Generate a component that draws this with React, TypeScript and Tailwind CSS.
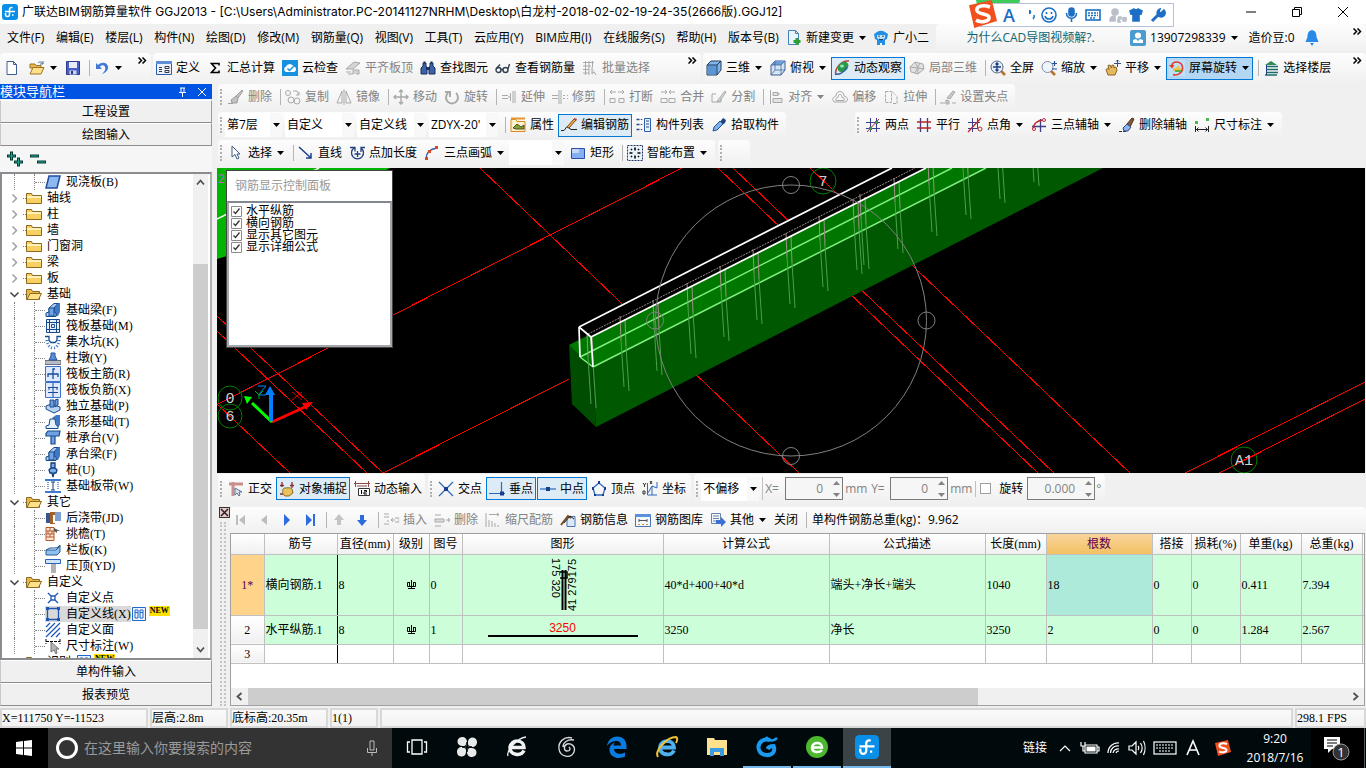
import type { ReactNode } from 'react'

const blue = '#2b5fb4'
const grey = '#a9a9a9'

// all glyphs are drawn on a 16x16 grid
const glyphs: Record<string, ReactNode> = {
  app: (
    <>
      <rect width="16" height="16" rx="3" fill="#0a8fe8" />
      <path d="M10.500 3.500h-1a2 2 0 0 0-2 2v5a2 2 0 0 1-4 0V9M3 7.500h10M10 11h1.500" fill="none" stroke="#fff" strokeWidth="1.500" />
    </>
  ),
  page: <path d="M3 1.500h6.500l3 3v10H3zM9.500 1.500v3h3" fill="#fff" stroke="#3d5f8f" />,
  open: (
    <>
      <path d="M1 4h5l1 1.500h5V8H1z" fill="#e8b84a" stroke="#9b7420" />
      <path d="M1 14 4 7.500h11L12 14z" fill="#ffe08a" stroke="#9b7420" />
      <path d="M9 3c2-2 4-1 5 1m0-3v3h-3" fill="none" stroke="#4d7396" />
    </>
  ),
  save: (
    <>
      <path d="M1.500 1.500h13v13h-13z" fill="#4a5fc4" stroke="#2b3a8c" />
      <path d="M4 2h8v6H4z" fill="#e6ecfa" />
      <path d="M4.500 10.500h7v4h-7z" fill="#cfd6ea" />
      <path d="M6 11h2v3H6z" fill="#2b3a8c" />
    </>
  ),
  undo: (
    <path d="M2 3v6h6L5.800 6.800C8 4.500 11 5 11.300 8c.2 2.500-1.500 4.300-3.300 6 4-1.500 6.500-4 6-7.500C13.300 2 7.500 1.500 4 5z" fill="#3f78d8" />
  ),
  define: (
    <>
      <path d="M.500 1.500h15v13H.500z" fill="#e9f0fb" stroke={blue} />
      <path d="M0 1h16v3H0z" fill="#5e8fd6" />
      <path d="M3 7.500h3m-3 2h3m-3 2h3M9 6.500h4v2H9zm0 4h4v2H9z" fill="none" stroke="#3a3a3a" />
    </>
  ),
  sigma: <path d="M12 5.500V3.500H4.500L8.500 8l-4 4.500H12v-2" fill="none" stroke="#000" strokeWidth="1.600" />,
  cloud: (
    <>
      <path d="M0 0h16v16H0z" fill="#1690e0" />
      <path d="M4 12a3 3 0 0 1 0-5.500 4 4 0 0 1 7.500 0A2.800 2.800 0 0 1 12 12z" fill="#fff" />
      <path d="m5.500 8.500 2 2 4-4" fill="none" stroke="#1690e0" strokeWidth="1.500" />
    </>
  ),
  flush: <path d="M1 9 9 2l6 1-7 6zM3 14h5v-4h6v4h-3M1 12h5" fill="#d4d4d4" stroke={grey} />,
  find: (
    <>
      <path d="M3 3h3v3l1 2v6H1V8l2-2zm7 0h3v3l2 2v6H9V8l1-2z" fill="#3c62a8" stroke="#1c2f5c" />
      <path d="M6 7h4v3H6zM3.500 1.500h2v2h-2zm7 0h2v2h-2z" fill="#1c2f5c" />
    </>
  ),
  glasses: (
    <g fill="none" stroke="#33404f" strokeWidth="1.400">
      <circle cx="3.500" cy="10" r="2.500" />
      <circle cx="10.500" cy="10" r="2.500" />
      <path d="M6 9.500h2M1.500 8.500 5 4.500M13 9l1.500-5" />
    </g>
  ),
  batch: (
    <g fill="none" stroke={grey}>
      <path d="M1 2.500h11M1 6h8M1 9.500h6M1 13h6M3.500 1v14M7 1v14M10.500 1v6" />
      <path d="M10 7v7l2-2 2 3" fill="#ddd" />
    </g>
  ),
  cube: (
    <>
      <path d="m1 5 4-4h10v9l-4 5H1z" fill="#7fb4e8" stroke="#23405f" />
      <path d="M1.500 5.500h9v9h-9z" fill="#5b95d4" />
      <path d="M1 5h10v10M11 5l4-4" fill="none" stroke="#23405f" />
    </>
  ),
  topview: (
    <>
      <path d="m1 5 4-4h10v9l-4 5H1z" fill="#d3e4f6" stroke="#3c5f8a" />
      <path d="m1 5 4-4h10l-4 4z" fill="#6a9fdc" />
      <path d="M1 5h10v10M11 5l4-4M5 1v9h10M5 10l-4 5" fill="none" stroke="#3c5f8a" strokeWidth=".7" />
    </>
  ),
  orbit: (
    <>
      <path d="M2 15C0 9 7 0 15 1" fill="none" stroke="#c43b3b" strokeWidth="1.500" />
      <ellipse cx="9" cy="7" rx="6" ry="4.500" transform="rotate(-40 9 7)" fill="#2a9a4a" />
      <ellipse cx="8" cy="6" rx="2" ry="1.500" fill="#9be3a8" />
      <path d="M1 14c4 1 9-1 12-7" fill="none" stroke="#2d5fae" strokeWidth="1.400" />
    </>
  ),
  partial: <path d="m1 7 5-5 8 2 1 5-6 5-7-2zM6 2l3 6m6 1-6-1-8-1m8 1v6m2-11-5 10" fill="#e2e2e2" stroke={grey} />,
  full: (
    <>
      <path d="m11 11 4 4" stroke="#b5702c" strokeWidth="2.500" />
      <circle cx="7" cy="7" r="6" fill="#e6f0fb" stroke="#56697f" />
      <path d="M7 3v8M3 7h8M5.500 4.500 7 3l1.500 1.500m-3 5L7 11l1.500-1.500" fill="none" stroke="#1c3c82" strokeWidth="1.300" />
    </>
  ),
  zoom: (
    <>
      <path d="m10 11 4 4" stroke="#b5702c" strokeWidth="2.500" />
      <circle cx="6.500" cy="7" r="5.500" fill="#eef5fc" stroke="#7c8c9e" />
      <path d="M11 3.500h5M13.500 1v5M11 9h5" fill="none" stroke="#24519b" strokeWidth="1.200" />
    </>
  ),
  pan: (
    <>
      <path d="M3 15 1 9.500l2-1 1 1-1-4 2-.500L6.500 8 7 5l2 .500V8l2-1 1 3-2 5z" fill="#e7b95f" stroke="#8c6420" />
      <path d="M12.500 0v7M9 3.500h7M11 1.500 12.500 0 14 1.500" fill="none" stroke="#34517a" />
    </>
  ),
  spin: (
    <>
      <path d="M0 0h16v16H0z" fill="#bfe0f7" />
      <path d="M4 14.500C8 16 14 13 13.500 7.500 13 1 4 0 2.500 6" fill="none" stroke="#e23a2e" strokeWidth="1.600" />
      <path d="m0 5 3 3.500L5.500 5z" fill="#e23a2e" />
      <path d="M4 8h3l2-3 3 4v2H4z" fill="#e9c64b" />
      <path d="M6 10h6v2H6z" fill="#5bae46" />
    </>
  ),
  floors: (
    <>
      <path d="M2 5 8 1l6 4z" fill="#2f8a57" />
      <path d="M4 6.500h11M4 9.500h11M4 12.500h11M2 15h12" stroke="#1e6b6b" strokeWidth="1.500" />
      <path d="M3.500 5v10" stroke="#25408a" />
    </>
  ),
  brush: <path d="m14 1-6 6 2 2 5-7zM8 7l-5 4 1 3h5l1-5zM0 14.500h5" fill="#c2c2c2" stroke="#9f9f9f" />,
  copy: (
    <g fill="none" stroke={grey}>
      <circle cx="3" cy="4" r="2.500" />
      <circle cx="6" cy="11" r="3" />
      <circle cx="12" cy="12" r="3" />
      <path d="M8 2h4l2 4m0-3v3h-3" />
    </g>
  ),
  mirror: <path d="M6 2v12H1zM10 2v12h5zM8 0v16" fill="none" stroke={grey} />,
  move: <path d="M8 1v14M1 8h14M6 3l2-2 2 2M6 13l2 2 2-2M3 6 1 8l2 2m10-4 2 2-2 2" fill="none" stroke={grey} strokeWidth="1.400" />,
  rotate: <path d="M4 4a6 6 0 1 0 8 0M1 3h5v5" fill="none" stroke={grey} strokeWidth="2" />,
  extend: <path d="M1 6.500h6m-6 3h6M9.500 4v8M8 7v2M12 2v12m2-12v12" fill="none" stroke={grey} />,
  trim: <path d="M0 6.500h6m-6 3h6M7 1v14M9 1v14M11 6.500h2m-2 3h2m2-3h1m-1 3h1" fill="none" stroke={grey} />,
  cut: <path d="M1 3h6M9 3h6M3 1 1 3l2 2m10-4 2 2-2 2M1 9.500h5v4H1zM10 9.500h5v4h-5z" fill="none" stroke={grey} />,
  merge: <path d="M1 3h6M9 3h6M5 1l2 2-2 2m6-4L9 3l2 2M1 9.500h6v4H1zM9 9.500h6v4H9z" fill="none" stroke={grey} />,
  split: <path d="M1 13h9M1 5h4M1 5v8m9 0V9m4-7-7 9-1 2 3-1 6-9z" fill="#ddd" stroke={grey} />,
  align: <path d="M2.500 1v14M5 3.500h5v3H5zM5 9.500h9v4H5zM12 5H9" fill="#e3e3e3" stroke={grey} />,
  offset: (
    <g fill="none" stroke={grey}>
      <path d="M2 13c-3-4 0-5 2-6 0-6 8-6 8 0 3 1 5 3 2 6z" />
      <path d="M4 11.500c-1-2 1-3 2-3 0-4 4-4 4 0 2 0 3 1 2 3z" />
    </g>
  ),
  stretch: <path d="M2.500 2.500h6v11h-6zM9 2.500l4 4m1 1v7H9" fill="none" stroke={grey} strokeDasharray="3 1" />,
  grip: <path d="M0 14h5m7 0h4M6 11v4h3v-3zM7 9l6-7 2 1-5 7z" fill="#c9c9c9" stroke={grey} />,
  props: (
    <>
      <path d="M1 2.500h5l1 2h8v10H1z" fill="#fff2cf" stroke="#d88a1c" />
      <path d="M1 1.500h14" stroke="#e89530" strokeWidth="2" />
      <path d="m3 11 4-4 4 3 3-2v4H6z" fill="#7ba53a" stroke="#5a4a1c" />
    </>
  ),
  editbar: (
    <>
      <path d="M0 13.500h3l3-4 4 3h6" fill="none" stroke="#222" />
      <path d="M6 10 13 2l2 1-7 8z" fill="#f2b04b" stroke="#7a4a12" />
      <path d="m13 1 3 1-1 2-2-2z" fill="#c0392b" />
    </>
  ),
  list: (
    <>
      <path d="M.500 2.500h3m-3 5h3m-3 5h3M5.500 2v1m0 4v1m0 4v1" stroke="#2a4a86" strokeWidth="1.500" />
      <path d="M8.500 1.500h6v13h-6z" fill="#e9f1fc" stroke={blue} />
      <path d="M10 4h3m-3 3h3m-3 3h3" stroke="#2a4a86" />
    </>
  ),
  pick: (
    <>
      <path d="m9 5 3-4 3 2-1 3-3 2z" fill="#24427c" />
      <path d="m2 14 1-4 6-6 3 3-6 6z" fill="#7fb2ec" stroke="#2b5290" />
    </>
  ),
  arrow: <path d="M4 1v11l3-2.500L9 14l2-1-2-4h3z" fill="#fff" stroke="#3d5a80" />,
  line: <path d="m1 2 12 11m-5 0h5V8" fill="none" stroke="#1d3f8f" strokeWidth="1.500" />,
  length: (
    <g fill="none" stroke="#23407f" strokeWidth="1.300">
      <path d="M5 3a6 6 0 1 0 7 0M1 2.500h5v4M12 7V2.500h4" />
      <path d="M8.500 6v6M5.500 9h6" />
    </g>
  ),
  arc: (
    <>
      <path d="M2 14C2 8 6 4 13 3" fill="none" stroke="#3d5fa8" strokeWidth="1.300" />
      <path d="M1 12h3v3H1zM4 5h3v3H4zM11 1h3v3h-3z" fill="#d14b2a" />
    </>
  ),
  rect: (
    <>
      <path d="M1.500 3.500h13v10h-13z" fill="#86aef2" stroke="#2a4fa8" />
      <path d="M2 4h7v4H2z" fill="#c3d8fb" />
    </>
  ),
  smart: (
    <>
      <path d="M.500.500h15v15H.500z" fill="#eaf2fc" stroke="#1f3566" strokeDasharray="2 1" />
      <path d="M8 2.500v3m0 5v3M2.500 8h3m5 0h3M4 4l1 1m6 6 1 1m0-8-1 1m-6 6-1 1" stroke="#000" strokeWidth="1.600" fill="none" />
    </>
  ),
  twopt: (
    <>
      <path d="M1 5.500h14M1 11.500h14M5.500 1v14M11.500 1v14" stroke="#3b3f8c" />
      <path d="M2 15 14 2" stroke="#b3262a" />
      <path d="M4 10h3v3H4zM10 4h3v3h-3z" fill="#2f9a3c" />
    </>
  ),
  parallel: (
    <>
      <path d="M4.500 1v14M11.500 1v14" stroke="#3b3f8c" strokeWidth="1.300" />
      <path d="M1 5h14M1 11h14" stroke="#b3262a" strokeWidth="1.300" />
    </>
  ),
  angle: (
    <>
      <path d="M1 5.500h12M1 11.500h10M5.500 1v14M10.500 1v10" stroke="#3b3f8c" fill="none" />
      <path d="M1 15 14 1" stroke="#c02a2e" strokeWidth="1.300" />
      <circle cx="13" cy="12" r="2" fill="none" stroke="#c02a2e" />
    </>
  ),
  three: (
    <>
      <path d="M9.500 2v13M1 9.500h14" stroke="#3b3f8c" strokeWidth="1.300" />
      <path d="M2 13C2 7 6 3 13 3" fill="none" stroke="#c02a2e" strokeWidth="1.300" />
      <circle cx="3" cy="12" r="1.500" fill="#fff" stroke="#c02a2e" />
      <circle cx="13" cy="3" r="1.500" fill="#fff" stroke="#c02a2e" />
    </>
  ),
  delaxis: (
    <>
      <path d="M0 14.500h8" stroke="#333" strokeDasharray="3 1" />
      <path d="m13 1-5 6 3 3 4-8z" fill="#8a5a36" stroke="#49301c" />
      <path d="m8 7-4 4 1 3h4l3-4z" fill="#8fb4ec" stroke="#2b4a8a" />
    </>
  ),
  dim: (
    <>
      <path d="M1 4h3v3H1zM12 1h3v3h-3z" fill="#4cb84c" />
      <path d="M1.500 9v6m13-6v6M2 12.500h12M4.500 10.500l-2 2 2 2m7-4 2 2-2 2" fill="none" stroke="#222" />
    </>
  ),
  ortho: (
    <>
      <path d="M1 3h14M5 1v14" stroke="#c88f8c" strokeWidth="3" />
      <path d="M7 7v7l2-2 2 3 1-1-1-3h3z" fill="#dbe6f2" stroke="#5b7795" />
    </>
  ),
  snap: (
    <>
      <path d="M1 4.500h4m6 0h4M3 1v5m10-5v6M1 13h4" stroke="#8b2c2c" strokeWidth="1.300" />
      <path d="M4 13c-1-4 0-6 2-6s5-1 7 1l1 4-4 3H6z" fill="#e8c35f" stroke="#8d6a20" />
    </>
  ),
  dyn: (
    <>
      <path d="M0 2.500h16M1.500 0v6m13-6v6M3 5h10" stroke="#8b4a4a" />
      <path d="M4.500 7.500h11v7h-11z" fill="#fff" stroke="#333" />
      <path d="M7.500 9v4M10 9.500h2.500v1.500H10V13h3" fill="none" stroke="#000" />
    </>
  ),
  cross: (
    <>
      <path d="m1 1 14 14M15 1 1 15" stroke="#2e68bd" strokeWidth="1.200" />
      <path d="M6 6h4v4H6z" fill="#173e91" />
    </>
  ),
  perp: (
    <>
      <path d="M0 12.500h16M12.500 1v12" stroke="#2e68bd" strokeWidth="1.200" />
      <path d="M11 10.500h4v4h-4z" fill="#173e91" />
    </>
  ),
  mid: (
    <>
      <path d="M0 8h16" stroke="#2e68bd" strokeWidth="1.200" />
      <path d="M6 6h4v4H6z" fill="#173e91" />
    </>
  ),
  vertex: (
    <>
      <path d="M8 2 2 7l2 7h8l2-7z" fill="none" stroke="#2e68bd" strokeWidth="1.300" />
      <path d="M7 0h2v3H7zM1 6h2v3H1zm12 0h2v3h-2zM3 13h2v2H3zm8 0h2v2h-2z" fill="#173e91" />
    </>
  ),
  coord: (
    <g fill="none" stroke="#2e68bd">
      <path d="M5.500 2v12H15M6 12l4-7 5 2v-6M10 5v9" />
      <path d="M1 2l1.500 2L4 2M2.500 4v2M1 10h2v3H1zM8 0l2 3m0-3L8 3" stroke="#333" />
    </g>
  ),
  first: <path d="M3 3h2v10H3zM12 3v10L6 8z" fill="#bdbdbd" />,
  prev: <path d="M11 3v10L5 8z" fill="#bdbdbd" />,
  next: <path d="M5 2v12l6-6z" fill="#2d6ce0" />,
  last: <path d="M4 2v12l6-6zM11 2h2v12h-2z" fill="#2d6ce0" />,
  up: <path d="m8 2 5 6h-3v5H6V8H3z" fill="#c4c4c4" />,
  down: <path d="m8 14 5-6h-3V3H6v5H3z" fill="#2d6ce0" />,
  insert: <path d="M1 2h5M1 5h5M1 12h5M6 9H4m8-1H8m2-2L8 8l2 2M12 6h4v4h-4" fill="none" stroke={grey} />,
  remove: <path d="M1 3h6M1 7h9v3H1zM1 14h6m5-6h4m-2-2 2 2-2 2" fill="#ddd" stroke={grey} />,
  scale: <path d="M1 1v14M4 2.500h10M12 1l2 1.500L12 4M4 8v7m3-6v6m3-4v4m3-2v2" fill="none" stroke={grey} />,
  info: (
    <>
      <path d="M7 4.500h8v10H7z" fill="#dce9fa" stroke="#4674b5" />
      <path d="m1 13 7-9 3 2" fill="none" stroke="#7a4a1c" strokeWidth="2" />
      <path d="m4 11 6-7 4 3" fill="none" stroke="#222" />
    </>
  ),
  lib: (
    <>
      <path d="M.500 2.500h15v12H.500z" fill="#f3f8fe" stroke="#4674b5" />
      <path d="M0 2h16v3H0z" fill="#5b90da" />
      <path d="M4 8.500h8M4 7v3m8-3v3" stroke="#555" />
      <path d="M3 12h2v1H3zm4 0h2v1H7zm4 0h2v1h-2z" fill="#d8902c" />
    </>
  ),
  other: (
    <>
      <path d="M1.500 1.500h9v10h-9z" fill="#eff5fc" stroke="#6a83a8" />
      <path d="M3 4h6M3 6.500h6M3 9h4" stroke="#6a83a8" />
      <path d="M6 8h5V5l5 5-5 5v-3H6z" fill="#3b70d6" />
    </>
  ),
  change: (
    <>
      <path d="M2.500.500h7l3 3v11h-10zM9.500.500v3h3" fill="#eaf4fd" stroke="#3f81bd" />
      <path d="M11 8v7M7.500 11.500h7" stroke="#2f9e35" strokeWidth="3" />
    </>
  ),
  mascot: (
    <>
      <path d="M1 4 4 2a8 8 0 0 1 8 0l3 2-1 5-2 1v5H9v-2H7v2H4v-5L2 9z" fill="#2290e6" />
      <path d="M4 5h8v3a5 5 0 0 1-8 0z" fill="#bfe2fb" />
      <path d="M6 5.500V7M10 5.500V7M6 9c1 1 3 1 4 0" fill="none" stroke="#123" />
    </>
  ),
  user: (
    <>
      <rect width="16" height="16" rx="2" fill="#4a9cd0" />
      <circle cx="8" cy="5.500" r="3" fill="#fff" />
      <path d="M3 13v-3l3-1 2 2 2-2 3 1v3z" fill="#fff" />
    </>
  ),
  bell: <path d="M8 0c4 1 4.500 4 4.500 7l2 5h-13l2-5C3.500 4 4 1 8 0zM6 13h4l-2 3z" fill="#2a8ae8" />,
  folder: (
    <>
      <path d="M.500 3.500h5l1 2h9v8H.500z" fill="#f7cf63" stroke="#8a6a1f" />
      <path d="M1 6h14v2H1z" fill="#fff0b8" />
    </>
  ),
  folderOpen: (
    <>
      <path d="M.500 3.500h5l1 2h7v8H.500z" fill="#e8b84a" stroke="#8a6a1f" />
      <path d="m1 13.500 3-6h11.500l-3 6z" fill="#ffe08a" stroke="#8a6a1f" />
    </>
  ),
  slab: <path d="M4 2h11l-3 12H1z" fill="#8db9f2" stroke="#1f4d9c" strokeWidth="1.500" />,
  fbeam: (
    <>
      <path d="M8 5 12 1h3v9l-2 4h-3z" fill="#3f78c4" />
      <path d="M1 14.500V11l3-1V6l5-4.500h4L9 6v4l2 1v3.500z" fill="#a9cbf3" stroke="#174a8a" />
      <path d="M4 6h5v8H4z" fill="#6fa3e6" stroke="#174a8a" />
    </>
  ),
  raft: <path d="M1.500 1.500h13v13h-13zM4.500 1v14M11.500 1v14M1 4.500h14M1 11.500h14M6.500 6.500h3v3h-3z" fill="#e6f0fd" stroke="#174a8a" />,
  pit: (
    <>
      <path d="M0 2.500h4v4l2 2h4l2-2v-4h4" fill="none" stroke="#174a8a" strokeWidth="1.300" />
      <path d="M2 6c0 5 3 8 6 8s6-3 6-8" fill="none" stroke="#3b79cc" strokeDasharray="1 2" strokeWidth="3" />
    </>
  ),
  pier: (
    <>
      <path d="M0 10.500h16v4H0z" fill="#b8bcc4" stroke="#6c7078" />
      <path d="m4 10 2-4V3h4v3l2 4z" fill="#5d8fd8" stroke="#24509b" />
    </>
  ),
  rmain: (
    <>
      <path d="M.500.500h15v15H.500z" fill="#dfeafd" stroke="#3d6fd0" />
      <path d="M10 3H8v10M3 11V8h10v3" fill="none" stroke="#174a9c" strokeWidth="1.300" />
    </>
  ),
  rneg: (
    <>
      <path d="M.500.500h15v15H.500z" fill="#dfeafd" stroke="#3d6fd0" />
      <path d="M8 1v14M3 5.500h10M3 10.500h10M4 5v3m8-3v3" fill="none" stroke="#174a9c" />
    </>
  ),
  isolated: (
    <>
      <path d="m1 8 5-2 9 3v3l-6 3-8-4z" fill="#b9d3f5" stroke="#174a8a" />
      <path d="M5 2h4v7H5zM10 2l3-1v6l-3 2z" fill="#6b9ee0" stroke="#174a8a" />
    </>
  ),
  strip: (
    <>
      <path d="m7 4 4-3h4v10l-3 3-1-6z" fill="#3f78c4" />
      <path d="M1 14.500V12l3-1 1-6h5l1 6 2 1v2.500z" fill="#e6f0fd" stroke="#174a8a" />
    </>
  ),
  pilecap: <path d="M1 3.500 3 1h12l-1 5H1zM6 6v8h4V6" fill="#6fa3e6" stroke="#174a8a" strokeWidth="1.200" />,
  pile: <path d="M6 1h4v5H6zM4 8l2-2h4l2 2-1 3H9l-1 4-1-4H5z" fill="#7fb0ee" stroke="#123e7c" strokeWidth="1.300" />,
  band: (
    <>
      <path d="M0 1h16v2H0zM0 13h16v2H0z" fill="#3d7ad4" />
      <path d="M8 4v8M6 4h4m-4 8h4" stroke="#123e7c" />
      <path d="M3 4v8m10-8v8" stroke="#123e7c" strokeDasharray="1 1" />
    </>
  ),
  post: (
    <>
      <path d="M1 3h5v10H1z" fill="#37588f" />
      <path d="M5 2h5v12H5z" fill="#a2602c" />
      <path d="M8 5h2v8H8z" fill="#fff" />
      <path d="M10 2h6v9h-6z" fill="#7f9fd0" />
    </>
  ),
  eave: (
    <>
      <path d="M1 1.500h8v13H1zM1 5h8M1 8h8M1 11h8M5 2v3M3 5v3m4-3v3M5 8v3" fill="#ffe6d2" stroke="#b3592a" />
      <path d="m9 2 6 3h-3v2L9 5z" fill="#5a5a5a" />
    </>
  ),
  parapet: <path d="M1 8 5 6h7l3-3v7l-3 3H1zM1 8h10l4-4" fill="#8fc0f0" stroke="#255c96" />,
  coping: (
    <>
      <path d="M.500 1.500h15v4H.500z" fill="#cfe3fb" stroke="#2a63b8" />
      <path d="M6 6h5v9H6z" fill="#b2b2b2" />
    </>
  ),
  cpoint: <path d="m3 3 3 3m4 4 3 3m0-10-3 3m-4 4-3 3M6 6h4v4H6z" fill="#fff" stroke="#1d56b5" strokeWidth="1.300" />,
  cline: (
    <>
      <path d="M2.500 2.500h11v11h-11z" fill="none" stroke="#1d56b5" strokeWidth="1.300" />
      <path d="M1 1h3v3H1zM12 1h3v3h-3zM1 12h3v3H1zM12 12h3v3h-3z" fill="#1d56b5" />
    </>
  ),
  carea: <path d="m1 5 4-4M1 10l9-9M1 15 15 1M6 15l9-9m-4 9 4-4" stroke="#1d56b5" strokeWidth="1.200" />,
  cdim: (
    <>
      <path d="M1 1v5m14-5v5M1 3.500h14" stroke="#000" strokeDasharray="3 1" />
      <path d="M6 4v10l3-2 2 4 1-1-1-4h3z" fill="#b5b5b5" stroke="#777" />
    </>
  ),
  docs: <path d="M1.500 1.500h13v13h-13zM4 4h3v8H4zM9 4h3v8H9zM4 6.500h3M9 6.500h3" fill="#eaf3fe" stroke="#2268c8" />,
  sogou: (
    <>
      <path d="m0 3 13-3 3 12-13 4z" fill="#f0501e" />
      <path d="M12 4C8 2.500 4 3.500 4.500 6s7 1.500 7 4-5 3-7.500 1.500" fill="none" stroke="#fff" strokeWidth="2" />
    </>
  ),
}

function Icon({ name, className = 'size-4' }: { name: string; className?: string }) {
  return (
    <svg viewBox="0 0 16 16" className={`shrink-0 ${className}`} aria-hidden="true">
      {glyphs[name]}
    </svg>
  )
}

function Caret({ className = '' }: { className?: string }) {
  return (
    <svg viewBox="0 0 7 4" className={`h-1 w-[7px] shrink-0 ${className}`} aria-hidden="true">
      <path d="M0 0h7L3.500 4z" fill="currentColor" />
    </svg>
  )
}

function More() {
  return (
    <button aria-label="更多" className="mr-1 ml-auto self-start">
      <svg viewBox="0 0 9 7" className="mt-1 h-[7px] w-[9px]">
        <path d="m.500.500 3 3-3 3m4-6 3 3-3 3" fill="none" stroke="#000" strokeWidth="1.500" />
      </svg>
    </button>
  )
}

type ToolProps = { icon?: string; label?: string; off?: boolean; on?: boolean; drop?: boolean; strong?: boolean }

function Tool({ icon, label, off, on, drop, strong }: ToolProps) {
  const state = on
    ? strong
      ? 'border-[#0078d7] bg-[#b3d7f3]'
      : 'border-[#0078d7] bg-[#dcebf5]'
    : 'border-transparent'
  return (
    <button
      disabled={off}
      aria-label={label ?? icon}
      className={`flex h-[23px] shrink-0 items-center gap-1 border px-0.5 ${state} ${off ? 'text-[#838383]' : 'text-black'}`}
    >
      {icon && <Icon name={icon} />}
      {label && <span>{label}</span>}
      {drop && <Caret className="mx-px" />}
    </button>
  )
}

const Sep = () => <div className="ml-1 h-4 w-px shrink-0 bg-[#b4b4b4]" />

const Grip = () => <div className="mx-0.5 h-4 w-0.5 shrink-0 border-l-2 border-dotted border-[#b0b0b0]" />

function Group({ className = '', children }: { className?: string; children?: ReactNode }) {
  return (
    <div className={`flex shrink-0 items-center gap-px rounded-sm bg-linear-to-b from-[#fdfdfd] to-[#f0f0f0] ${className}`}>
      {children}
    </div>
  )
}

function Combo({ label, value, className }: { label: string; value: string; className: string }) {
  return (
    <div className={`mr-0.5 flex h-6 shrink-0 items-center bg-white pl-0.5 ${className}`}>
      <select aria-label={label} className="min-w-0 flex-1 appearance-none bg-transparent outline-none">
        <option>{value}</option>
      </select>
      <span className="flex h-full w-3 items-center justify-center bg-[#f8f8f8]">
        <Caret />
      </span>
    </div>
  )
}

function Spin({ label, value, className }: { label: string; value: string; className: string }) {
  return (
    <div className={`flex h-[23px] shrink-0 items-center border border-[#7a7a7a] bg-[#f6f6f6] pr-0.5 text-[#838383] ${className}`}>
      <input aria-label={label} defaultValue={value} className="w-0 min-w-0 flex-1 bg-transparent pr-2.5 text-right outline-none" />
      <div className="flex flex-col gap-2">
        <button aria-label={`${label} +`}>
          <Caret className="rotate-180" />
        </button>
        <button aria-label={`${label} -`}>
          <Caret />
        </button>
      </div>
    </div>
  )
}

const menus = [
  '文件(F)', '编辑(E)', '楼层(L)', '构件(N)', '绘图(D)', '修改(M)', '钢筋量(Q)', '视图(V)',
  '工具(T)', '云应用(Y)', 'BIM应用(I)', '在线服务(S)', '帮助(H)', '版本号(B)',
]

function TitleBar() {
  return (
    <header className="relative flex h-6 shrink-0 items-center bg-white pl-0.5">
      <Icon name="app" />
      <h1 className="ml-1 flex-1 truncate font-['Inter','Noto_Sans_CJK_SC',sans-serif]">
        广联达BIM钢筋算量软件 GGJ2013 - [C:\Users\Administrator.PC-20141127NRHM\Desktop\白龙村-2018-02-02-19-24-35(2666版).GGJ12]
      </h1>
      {['M3 8h10', 'M3.500 5.500h7v7h-7zM5.500 5.500v-2h7v7h-2', 'm3 3 10 10M13 3 3 13'].map((d, i) => (
        <button key={d} aria-label={['最小化', '还原', '关闭'][i]} className="flex h-full w-[46px] items-center justify-center">
          <svg viewBox="0 0 16 16" className="size-4">
            <path d={d} fill="none" stroke="#000" />
          </svg>
        </button>
      ))}
      <ImeBar />
    </header>
  )
}

// floating input-method bar
function ImeBar() {
  return (
    <div className="absolute top-0 right-[192px] z-10 flex items-start">
      <div className="absolute -left-1 h-2 w-11 rounded-b-full bg-[#3ecb5a]" />
      <div className="relative mt-[3px] flex h-6 w-[194px] items-center gap-3 border border-[#b5c3d6] bg-white pl-5 text-[#1c6fc4]">
        <div className="absolute -top-1 -left-3">
          <Icon name="sogou" className="size-7" />
        </div>
        <span className="w-4 text-center text-lg leading-none font-semibold">A</span>
        <svg viewBox="0 0 144 16" className="h-4 w-36 shrink-0" fill="none" stroke="currentColor" strokeWidth="1.600">
          <circle cx="0" cy="5" r="1.500" fill="currentColor" />
          <path d="M5 8c1 2 0 3-1 4" />
          <circle cx="20" cy="8" r="7" />
          <path d="M17.500 5v2m5-2v2m-6.500 2c1 4 7 4 8 0" />
          <rect x="40" y="1" width="5" height="8" rx="2.500" fill="currentColor" />
          <path d="M37.500 6c0 7 10 7 10 0M42.500 11v4" />
          <rect x="57" y="3" width="14" height="10" />
          <path d="M59 6h10M59 8.500h10M61 11h6" strokeDasharray="2 1" />
          <g stroke="#b9bfc9" fill="#b9bfc9">
            <circle cx="86" cy="5" r="3" />
            <path d="M81 14c0-4 2-5 5-5v5zM89 10h3v2h-3v3h3m2-5v4h3v-4" />
          </g>
          <path d="m101 4 4-2c1 1 3 1 4 0l4 2-1 3-2-.500V14h-6V6.500l-2 .500z" fill="currentColor" />
          <path d="m123 14 7-7" strokeWidth="3" />
          <path d="M135 3a4 4 0 1 1-4-1l-1 3 2 1z" fill="currentColor" />
        </svg>
      </div>
    </div>
  )
}

function MenuBar() {
  return (
    <nav className="flex h-7 shrink-0 items-center pl-[7px]">
      <div className="flex w-[772px] shrink-0 justify-between">
        {menus.map((m) => (
          <button key={m}>{m}</button>
        ))}
      </div>
      <div className="ml-1 flex items-center">
        <Tool icon="change" label="新建变更" drop />
        <Tool icon="mascot" label="广小二" />
      </div>
      <Group className="ml-1 h-7 w-[189px] justify-center">
        <a href="#" className="text-[#0d6570]">为什么CAD导图视频解?.</a>
      </Group>
      <Group className="h-7 min-w-0 flex-1 pl-0.5">
        <Tool icon="user" label="13907298339" drop />
        <span className="ml-1.5">造价豆:0</span>
        <Icon name="bell" className="ml-2 size-4" />
        <More />
      </Group>
    </nav>
  )
}

function MainToolbar() {
  return (
    <div className="flex h-8 shrink-0 gap-0.5 overflow-hidden py-px">
      <Group className="w-[151px] pl-1">
        <Icon name="page" />
        <span className="w-1" />
        <Tool icon="open" drop />
        <Tool icon="save" />
        <Sep />
        <Tool icon="undo" drop />
        <More />
      </Group>
      <Group className="w-[548px]">
        <Tool icon="define" label="定义" />
        <Tool icon="sigma" label="汇总计算" />
        <Tool icon="cloud" label="云检查" />
        <Tool icon="flush" label="平齐板顶" off />
        <Tool icon="find" label="查找图元" />
        <Tool icon="glasses" label="查看钢筋量" />
        <Tool icon="batch" label="批量选择" off />
        <More />
      </Group>
      <Group className="min-w-0 flex-1">
        <Tool icon="cube" label="三维" drop />
        <Tool icon="topview" label="俯视" drop />
        <Tool icon="orbit" label="动态观察" on />
        <Tool icon="partial" label="局部三维" off />
        <Sep />
        <Tool icon="full" label="全屏" />
        <Tool icon="zoom" label="缩放" drop />
        <Tool icon="pan" label="平移" drop />
        <Tool icon="spin" label="屏幕旋转" drop on strong />
        <Sep />
        <Tool icon="floors" label="选择楼层" />
        <More />
      </Group>
    </div>
  )
}

function DrawToolbars() {
  return (
    <div className="flex shrink-0 flex-col gap-0.5 overflow-hidden pb-0.5 pl-px">
      <div className="flex h-[26px]">
        <Group className="pr-1">
          <Grip />
          <Tool icon="brush" label="删除" off />
          <Sep />
          <Tool icon="copy" label="复制" off />
          <Tool icon="mirror" label="镜像" off />
          <Sep />
          <Tool icon="move" label="移动" off />
          <Tool icon="rotate" label="旋转" off />
          <Sep />
          <Tool icon="extend" label="延伸" off />
          <Tool icon="trim" label="修剪" off />
          <Sep />
          <Tool icon="cut" label="打断" off />
          <Tool icon="merge" label="合并" off />
          <Tool icon="split" label="分割" off />
          <Sep />
          <Tool icon="align" label="对齐" off drop />
          <Tool icon="offset" label="偏移" off />
          <Tool icon="stretch" label="拉伸" off />
          <Sep />
          <Tool icon="grip" label="设置夹点" off />
        </Group>
      </div>
      <div className="flex h-[26px] justify-between">
        <Group className="pr-1">
          <Grip />
          <Combo label="楼层" value="第7层" className="w-[57px]" />
          <Combo label="类别" value="自定义" className="w-[69px]" />
          <Combo label="类型" value="自定义线" className="w-[69px]" />
          <Combo label="构件" value="ZDYX-20'" className="w-[69px]" />
          <Sep />
          <Tool icon="props" label="属性" />
          <Tool icon="editbar" label="编辑钢筋" on />
          <Tool icon="list" label="构件列表" />
          <Tool icon="pick" label="拾取构件" />
        </Group>
        <Group className="mr-[84px] pr-1">
          <Grip />
          <Tool icon="twopt" label="两点" />
          <Tool icon="parallel" label="平行" />
          <Tool icon="angle" label="点角" drop />
          <Tool icon="three" label="三点辅轴" drop />
          <Tool icon="delaxis" label="删除辅轴" />
          <Tool icon="dim" label="尺寸标注" drop />
        </Group>
      </div>
      <div className="flex h-[26px] gap-[3px]">
        <Group className="pr-1">
          <Grip />
          <Tool icon="arrow" label="选择" drop />
          <Sep />
          <Tool icon="line" label="直线" />
          <Tool icon="length" label="点加长度" />
          <Tool icon="arc" label="三点画弧" drop />
          <Combo label="画法" value="" className="w-[55px]" />
          <Tool icon="rect" label="矩形" />
          <Sep />
          <Tool icon="smart" label="智能布置" drop />
        </Group>
        <Group className="w-8">
          <Grip />
        </Group>
      </div>
    </div>
  )
}

type Leaf = [icon: string, text: string]
type Branch = { text: string; open?: boolean; leaves?: Leaf[] }

const tree: Branch[] = [
  { text: '轴线' }, { text: '柱' }, { text: '墙' }, { text: '门窗洞' }, { text: '梁' }, { text: '板' },
  {
    text: '基础',
    open: true,
    leaves: [
      ['fbeam', '基础梁(F)'], ['raft', '筏板基础(M)'], ['pit', '集水坑(K)'], ['pier', '柱墩(Y)'],
      ['rmain', '筏板主筋(R)'], ['rneg', '筏板负筋(X)'], ['isolated', '独立基础(P)'], ['strip', '条形基础(T)'],
      ['pilecap', '桩承台(V)'], ['fbeam', '承台梁(F)'], ['pile', '桩(U)'], ['band', '基础板带(W)'],
    ],
  },
  {
    text: '其它',
    open: true,
    leaves: [['post', '后浇带(JD)'], ['eave', '挑檐(T)'], ['parapet', '栏板(K)'], ['coping', '压顶(YD)']],
  },
  {
    text: '自定义',
    open: true,
    leaves: [['cpoint', '自定义点'], ['cline', '自定义线(X)'], ['carea', '自定义面'], ['cdim', '尺寸标注(W)']],
  },
]

function NewTag() {
  return (
    <>
      <Icon name="docs" />
      <span className="ml-0.5 h-2.5 self-start bg-[#ffe100] px-px text-[8px] leading-[10px] font-bold">NEW</span>
    </>
  )
}

function LeafRow({ leaf }: { leaf: Leaf }) {
  const [icon, text] = leaf
  const picked = icon === 'cline'
  return (
    <li className="flex h-4 items-center whitespace-nowrap">
      <span className="h-4 w-[13px] border-r border-dotted border-[#808080]" />
      <span className="h-4 w-5 border-r border-dotted border-[#808080]" />
      <span className="w-2.5 border-t border-dotted border-[#808080]" />
      <span className={`flex h-4 items-center gap-[5px] ${picked ? 'bg-[#d9d9d9]' : ''}`}>
        <Icon name={icon} />
        {text}
      </span>
      {picked && <NewTag />}
    </li>
  )
}

function BranchRow({ node }: { node: Branch }) {
  return (
    <li>
      <div className="flex h-4 items-center whitespace-nowrap">
        <svg viewBox="0 0 9 9" className={`ml-2 size-[9px] ${node.open ? 'rotate-90' : ''}`}>
          <path d="m2.500.500 4 4-4 4" fill="none" stroke={node.open ? '#404040' : '#a0a0a0'} strokeWidth="1.500" />
        </svg>
        <span className="ml-1 w-[3px] border-t border-dotted border-[#808080]" />
        <Icon name={node.open ? 'folderOpen' : 'folder'} />
        <span className="ml-[5px]">{node.text}</span>
      </div>
      {node.leaves && <ul>{node.leaves.map((l) => <LeafRow key={l[1]} leaf={l} />)}</ul>}
    </li>
  )
}

function PanelButton({ children }: { children: ReactNode }) {
  return (
    <button className="h-[23px] shrink-0 border border-t-white border-r-[#9a9a9a] border-b-[#8c8c8c] border-l-[#c8c8c8] bg-[#f0f0f0] text-center">
      {children}
    </button>
  )
}

function Chevron({ turn }: { turn: string }) {
  return (
    <svg viewBox="0 0 9 9" className={`size-[9px] shrink-0 ${turn}`} aria-hidden="true">
      <path d="m1 6.500 3.500-4L8 6.500" fill="none" stroke="#505050" strokeWidth="1.800" />
    </svg>
  )
}

function Sidebar() {
  return (
    <aside className="mr-[5px] flex w-[212px] shrink-0 flex-col font-['Liberation_Serif','Noto_Sans_CJK_SC',serif]">
      <div className="mb-px flex h-[15px] shrink-0 items-center bg-[#0054e3] pr-1 text-white">
        <h2 className="flex-1 text-[13px]">模块导航栏</h2>
        <svg viewBox="0 0 30 10" className="h-2.5 w-[30px]" fill="none" stroke="#fff">
          <path d="M2 1h5M3 1v4.500m3-4.500v4.500M1 5.500h7M4.500 6v4M20 1l8 8m0-8-8 8" />
        </svg>
      </div>
      <PanelButton>工程设置</PanelButton>
      <PanelButton>绘图输入</PanelButton>
      <div className="flex h-[26px] shrink-0 items-center bg-[#f6f6f6] pl-1.5">
        <svg viewBox="0 0 40 18" className="h-[18px] w-10" stroke="#003c34" strokeWidth="3">
          <path d="M1 6h9M5.500 1.500v9M8 12h9M12.500 7.500v9M24 6h9M31 12h9" />
          <path d="M2 6h7M5.500 2.500v7M9 12h7M12.500 8.500v7M25 6h7M32 12h7" stroke="#2aa090" strokeWidth="1" />
        </svg>
      </div>
      <div className="flex min-h-0 flex-1 border-2 border-[#8a8c90] border-r-[#b0b0b0] bg-white">
        <ul className="min-w-0 flex-1 overflow-hidden">
          <LeafRow leaf={['slab', '现浇板(B)']} />
          {tree.map((n) => (
            <BranchRow key={n.text} node={n} />
          ))}
          <li className="flex h-4 items-center">
            <Icon name="folder" className="ml-6 size-4" />
            <span className="mx-[5px]">识别</span>
            <NewTag />
          </li>
        </ul>
        <div className="mr-0.5 flex w-[15px] flex-col items-center bg-[#f0f0f0] py-1">
          <Chevron turn="" />
          <div className="mt-[77px] mb-4 w-full flex-1 bg-[#cdcdcd]" />
          <Chevron turn="rotate-180" />
        </div>
      </div>
      <PanelButton>单构件输入</PanelButton>
      <PanelButton>报表预览</PanelButton>
    </aside>
  )
}

// [x, top y] of every stirrup along the beam
const stirrups = [
  [587, 333], [620, 316], [653, 300], [687, 283], [720, 266], [753, 249], [786, 233], [819, 216],
  [853, 199], [860, 194], [894, 178], [928, 161], [962, 144], [996, 128], [1030, 111],
]

const axisMarks = [
  { x: 230, y: 398, r: 12, text: '0' },
  { x: 230, y: 416, r: 12, text: '6' },
  { x: 823, y: 181, r: 13, text: '7' },
  { x: 1244, y: 460, r: 13, text: 'A1' },
]

function Scene() {
  return (
    <svg viewBox="217 168 1148 305" preserveAspectRatio="xMinYMin slice" className="size-full" fill="none">
      <path d="M217 168h173L227 256l-10 3z" fill="#00b400" />
      <path d="M217 219 319 168" stroke="#fff" strokeWidth="1.500" />
      <text x="218" y="183" fill="#c060c0" fontSize="12" fontFamily="Liberation Sans">20</text>
      <path
        stroke="#f00"
        d="M480 168 799 473M218 404 682 168M383 473 569 379M718 168 1038 473M733 168l321 305M810 168l320 305M1185 473l180-91M1219 473l146-74M217 316l166 157M217 331l150 142M217 404l73 69"
        shapeRendering="crispEdges"
      />
      <path d="m569 345 348-177h69L592 367l-14-11z" fill="#007800" />
      <path d="m592 367 394-199h117L596 427z" fill="#005800" />
      <path d="m569 345 23 22 4 60-24-23z" fill="#004c00" />
      <path d="m579 327 313-159h34L591 337z" fill="#000" />
      <path d="M580 357 952 168M593 367 986 168M580 357l13 10" stroke="#80f080" strokeWidth="1.500" />
      <path d="M588 334 915 168" stroke="#a08c8c" strokeDasharray="2 1" />
      {stirrups.map(([x, y]) => (
        <g key={x}>
          <path d={`M${x} ${y}l1 24M${x + 5} ${y + 3}l1 27`} stroke="#a09088" />
          <path d={`M${x + 1} ${y + 24}l3 47M${x + 6} ${y + 30}l3 45`} stroke="#4ca04c" />
        </g>
      ))}
      <path d="M579 327 892 168M591 337 926 168M579 327l12 10 2 30M579 327l1 30" stroke="#fff" strokeWidth="1.700" />
      <g stroke="#808080">
        <circle cx="791" cy="320.500" r="135.500" />
        <circle cx="791" cy="185" r="8.500" />
        <circle cx="926.500" cy="320.500" r="8.500" />
        <circle cx="791" cy="456" r="8.500" />
        <circle cx="655" cy="320.500" r="8.500" />
      </g>
      {axisMarks.map((m) => (
        <g key={m.text}>
          <circle cx={m.x} cy={m.y} r={m.r} stroke="#008000" />
          <text x={m.x} y={m.y + 5} fill="#d0d0d0" fontSize="15" fontFamily="Liberation Mono" textAnchor="middle">
            {m.text}
          </text>
        </g>
      ))}
      <path d="m272 422 33-15" stroke="#f00" strokeWidth="3" />
      <path d="m313 402-11 1 4 7z" fill="#f00" />
      <path d="m272 422-20-19" stroke="#0f0" strokeWidth="3" />
      <path d="m244 396 8 1-5 7z" fill="#0f0" />
      <path d="M271 421v-28" stroke="#0080ff" strokeWidth="4" />
      <path d="m270 386-5 9h10z" fill="#0080ff" />
      <path d="M258 386h8l-8 9h8" stroke="#0080ff" />
      <path d="m255 391 4 4 4-4m-4 4v4" stroke="#0a0" />
      <path d="m292 392 10 8m0-8-10 8" stroke="#c00" />
    </svg>
  )
}

function Viewport() {
  return (
    <section className="relative mr-px min-h-0 flex-1 overflow-hidden bg-black">
      <Scene />
      <div className="absolute top-0.5 left-[9px] flex h-[178px] w-[167px] flex-col border border-[#444] bg-white">
        <h2 className="flex h-[30px] shrink-0 items-center pl-2 text-[#999]">钢筋显示控制面板</h2>
        <div className="flex-1 border-2 border-[#a5a7ad] border-t-[#828790] pt-0.5 pl-0.5">
          {['水平纵筋', '横向钢筋', '显示其它图元', '显示详细公式'].map((t) => (
            <label key={t} className="flex h-3 items-center gap-1 leading-3">
              <input type="checkbox" defaultChecked className="sr-only" />
              <svg viewBox="0 0 11 11" className="size-[11px]">
                <path d="M.500.500h10v10H.500z" fill="#fff" stroke="#8c8c8c" />
                <path d="m2.500 5.500 2 2 4-5" fill="none" stroke="#333" strokeWidth="1.300" />
              </svg>
              {t}
            </label>
          ))}
        </div>
      </div>
    </section>
  )
}

function SnapToolbar() {
  return (
    <div className="flex h-[34px] shrink-0 items-start gap-[3px] overflow-hidden pt-px pl-px">
      <Group className="h-[29px]">
        <Grip />
        <Tool icon="ortho" label="正交" />
        <Tool icon="snap" label="对象捕捉" on />
        <Tool icon="dyn" label="动态输入" />
      </Group>
      <Group className="h-[29px] pr-0.5">
        <Grip />
        <Tool icon="cross" label="交点" />
        <Tool icon="perp" label="垂点" on />
        <Tool icon="mid" label="中点" on />
        <Tool icon="vertex" label="顶点" />
        <Tool icon="coord" label="坐标" />
      </Group>
      <Group className="h-[29px] pr-1">
        <Grip />
        <Combo label="偏移方式" value="不偏移" className="w-[58px]" />
        <div className="flex items-center gap-0.5 border-l border-[#c0c0c0] pl-0.5 text-[#838383]">
          <span className="w-[18px]">X=</span>
          <Spin label="X" value="0" className="w-[58px]" />
          <span className="w-6">mm</span>
          <span className="w-[17px]">Y=</span>
          <Spin label="Y" value="0" className="w-[58px]" />
          <span className="w-6">mm</span>
        </div>
        <label className="flex items-center gap-2 border-l border-[#c0c0c0] pl-1">
          <input type="checkbox" className="size-[11px] appearance-none border border-[#a0a0a0] bg-white" />
          旋转
        </label>
        <span className="w-0.5" />
        <Spin label="角度" value="0.000" className="w-[68px]" />
        <span className="text-[#838383]">°</span>
      </Group>
    </div>
  )
}

function RebarToolbar() {
  return (
    <Group className="h-[26px] min-w-0 overflow-hidden">
      <Tool icon="first" off />
      <Tool icon="prev" off />
      <Tool icon="next" />
      <Tool icon="last" />
      <Sep />
      <Tool icon="up" off />
      <Tool icon="down" />
      <Sep />
      <Tool icon="insert" label="插入" off />
      <Tool icon="remove" label="删除" off />
      <Tool icon="scale" label="缩尺配筋" off />
      <Tool icon="info" label="钢筋信息" />
      <Tool icon="lib" label="钢筋图库" />
      <Tool icon="other" label="其他" drop />
      <Tool label="关闭" />
      <Sep />
      <span className="ml-1">单构件钢筋总重(kg)：9.962</span>
    </Group>
  )
}

const heads = ['', '筋号', '直径(mm)', '级别', '图号', '图形', '计算公式', '公式描述', '长度(mm)', '根数', '搭接', '损耗(%)', '单重(kg)', '总重(kg)']

function Grade() {
  return (
    <svg viewBox="0 0 9 10" className="mx-auto h-2.5 w-[9px]" fill="none" stroke="#000">
      <path d="M3 2.500H.500v4h8v-4H6M4.500 0v8M2.500 2v4m4-4v4M1 8.500h7" />
    </svg>
  )
}

function StirrupShape() {
  return (
    <svg viewBox="0 0 200 60" className="mx-auto h-[60px] w-[200px]">
      <path d="M99.500 15v40M102.500 15v40" stroke="#000" strokeWidth="2" />
      <path d="M97 17h7v6h-7" fill="none" stroke="#000" strokeWidth="1.500" />
      <g fontSize="11" fontFamily="Liberation Sans">
        <text transform="translate(89 3) rotate(90)">175 320</text>
        <text transform="translate(113 56) rotate(-90)">41 279175</text>
      </g>
    </svg>
  )
}

function BarShape() {
  return (
    <div className="mx-auto w-[150px] border-b-2 border-black text-center leading-[13px] text-[#f00] font-['Liberation_Sans']">
      3250
    </div>
  )
}

const rows: ReactNode[][] = [
  ['横向钢筋.1', '8', <Grade />, '0', <StirrupShape />, '40*d+400+40*d', '端头+净长+端头', '1040', '18', '0', '0', '0.411', '7.394'],
  ['水平纵筋.1', '8', <Grade />, '1', <BarShape />, '3250', '净长', '3250', '2', '0', '0', '1.284', '2.567'],
]

function RebarTable() {
  return (
    <table className="w-full table-fixed border-collapse font-['Liberation_Serif','Noto_Sans_CJK_SC',serif] whitespace-nowrap">
      <colgroup>
        <col className="w-[33px]" />
        <col className="w-[73px]" />
        <col className="w-[56px]" />
        <col className="w-[36px]" />
        <col className="w-[33px]" />
        <col className="w-[201px]" />
        <col className="w-[166px]" />
        <col className="w-[156px]" />
        <col className="w-[61px]" />
        <col className="w-[106px]" />
        <col className="w-[39px]" />
        <col className="w-[49px]" />
        <col className="w-[61px]" />
        <col className="w-[61px]" />
        <col />
      </colgroup>
      <thead>
        <tr className="h-5">
          {heads.map((h, i) => (
            <th
              key={i}
              className={`border-r border-b border-[#c0c0c0] p-0 font-normal ${
                i === 9 ? 'bg-linear-to-b from-[#f8d49a] to-[#f2c162] text-[#5a0050]' : 'bg-linear-to-b from-white to-[#f0f0f0]'
              }`}
            >
              {h}
            </th>
          ))}
          <th className="border-b border-[#c0c0c0] p-0" />
        </tr>
      </thead>
      <tbody>
        {rows.map((cells, r) => (
          <tr key={r} className={`bg-[#ccffd9] ${r === 0 ? 'h-[61px]' : 'h-[29px]'}`}>
            <th
              className={`border-r border-b border-[#c0c0c0] p-0 font-normal ${
                r === 0 ? 'bg-[#ffd38a] text-[#5a0050]' : 'bg-linear-to-b from-white to-[#f0f0f0]'
              }`}
            >
              {r === 0 ? '1*' : '2'}
            </th>
            {cells.map((c, i) => (
              <td
                key={i}
                className={`overflow-hidden border-r border-b border-[#c0c0c0] py-0 ${i === 4 || i === 2 ? 'px-0' : 'px-px'} ${
                  i === 0 ? 'border-r-black' : ''
                } ${r === 0 && i === 8 ? 'bg-[#adead9]' : ''}`}
              >
                {c}
              </td>
            ))}
            <td className="border-b border-[#c0c0c0] p-0" />
          </tr>
        ))}
        <tr className="h-[19px]">
          <th className="border-r border-b border-[#c0c0c0] bg-linear-to-b from-white to-[#f0f0f0] p-0 font-normal">3</th>
          {heads.slice(1).map((h, i) => (
            <td key={h} className={`border-r border-b border-[#c0c0c0] p-0 ${i === 0 ? 'border-r-black' : ''}`} />
          ))}
          <td className="border-b border-[#c0c0c0] p-0" />
        </tr>
      </tbody>
    </table>
  )
}

function RebarPane() {
  return (
    <section className="flex h-[199px] shrink-0">
      <div className="flex w-[13px] shrink-0 flex-col pl-0.5">
        <button aria-label="关闭面板" className="mb-1 size-[11px] border border-[#333] bg-[#e8c8c8]">
          <svg viewBox="0 0 9 9">
            <path d="m1 1 7 7m0-7L1 8" stroke="#222" strokeWidth="1.500" />
          </svg>
        </button>
        <div className="ml-px flex flex-1 gap-0.5">
          <span className="border-l-2 border-dotted border-[#c4c4c4]" />
          <span className="border-l-2 border-dotted border-[#c4c4c4]" />
        </div>
      </div>
      <div className="flex min-w-0 flex-1 flex-col">
        <RebarToolbar />
        <div className="mr-px flex min-h-0 flex-1 flex-col justify-between overflow-hidden border border-[#a0a0a0] bg-white">
          <RebarTable />
          <div className="flex h-[17px] shrink-0 items-center bg-[#f0f0f0] px-1">
            <Chevron turn="-rotate-90" />
            <div className="ml-1 h-full w-[730px] bg-[#cdcdcd]" />
            <span className="flex-1" />
            <Chevron turn="rotate-90" />
          </div>
        </div>
      </div>
    </section>
  )
}

function StatusBar() {
  const cell = 'flex items-center border-2 border-[#d8d8d8] bg-linear-to-b from-[#fafafa] to-[#f2f2f2]'
  return (
    <footer className="flex h-[22px] shrink-0 gap-0.5 pt-0.5 font-['Liberation_Serif','Noto_Sans_CJK_SC',serif] whitespace-nowrap">
      <span className={`${cell} w-[148px]`}>X=111750 Y=-11523</span>
      <span className={`${cell} w-[78px]`}>层高:2.8m</span>
      <span className={`${cell} w-[98px]`}>底标高:20.35m</span>
      <span className={`${cell} w-12`}>1(1)</span>
      <span className={`${cell} flex-1`} />
      <span className={`${cell} w-[71px]`}>298.1 FPS</span>
    </footer>
  )
}

const apps: { name: string; art: ReactNode; state?: string }[] = [
  { name: '任务视图', art: <path d="M7 5h10v14H7zM5 7H2.500v10H5M19 7h2.500v10H19" fill="none" stroke="#fff" strokeWidth="1.300" /> },
  {
    name: '花瓣',
    art: (
      <g fill="#e8eaea">
        <path d="M11 11H7C1 11 1 2 7 2c3 0 5 2 5 5s-1 4-1 4zM13 11V7c0-6 9-6 9 0 0 3-2 5-5 5s-4-1-4-1zM13 13h4c6 0 6 9 0 9-3 0-5-2-5-5s1-4 1-4zM11 13v4c0 6-9 6-9 0 0-3 2-5 5-5s4 1 4 1z" />
        <path d="M12 7c0 3 2 5 5 5-3 0-5 2-5 5 0-3-2-5-5-5 3 0 5-2 5-5z" fill="none" stroke="#000a0c" />
      </g>
    ),
  },
  {
    name: '浏览器',
    art: (
      <g fill="none" stroke="#f2f2f2">
        <path d="M5 12.500h14c0-8-13-9-14 0 0 8 11 9 14 3" strokeWidth="3.500" />
        <path d="M3 21C1 16 12 3 21 2" strokeWidth="1.300" />
      </g>
    ),
  },
  {
    name: '漩涡',
    art: <path d="M17 3c-8-2-14 4-13 11 1 8 12 10 15 3 2-6-3-9-7-8-4 2-3 7 0 7 3 0 4-2 2-4M19 5c-6-1-11 2-11 7" fill="none" stroke="#d5d8d8" strokeWidth="1.400" />,
  },
  {
    name: 'Edge',
    art: <path d="M2 11C3 5 7 1.500 12 1.500c6 0 9.500 4 9.500 9.500v3H9c.5 5 7 6 11 3.500v4C13 25 4 22 4.500 14 5 10 8 8 10 7.500 8.500 9 8.500 10 8.500 10.500H16C16 4 6 5 2 11z" fill="#0a7ce0" />,
  },
  {
    name: 'Internet Explorer',
    art: (
      <g fill="none">
        <path d="M5 12.500h14c0-8-13-9-14 0 0 8 11 9 14 3" stroke="#4fb0f0" strokeWidth="3.800" />
        <path d="M3 22C-1 16 12 2 21 2c2 1 1 4 0 6" stroke="#f2c230" strokeWidth="2" />
      </g>
    ),
  },
  {
    name: '文件资源管理器',
    art: (
      <>
        <path d="M2 3h7l1 2h12v15H2z" fill="#ffe08c" />
        <path d="M5 13h14v8h-4v-4H9v4H5z" fill="#3a9be0" />
      </>
    ),
  },
  {
    name: '广联达',
    state: 'border-[#76b9ed]',
    art: (
      <g fill="none" stroke="#1a9af0">
        <path d="M15 5C9 3 3 7 3.500 13c1 8 12 9 15 4 1-2 1-4 0-6-3 0-5 1-6 3" strokeWidth="4" />
        <path d="M11 2c3 4 7 5 11 1" strokeWidth="2.500" />
      </g>
    ),
  },
  {
    name: '360浏览器',
    state: 'border-[#76b9ed]',
    art: (
      <>
        <circle cx="12" cy="12" r="11" fill="#4cb82e" />
        <path d="M7 12.500h10c0-6-9-6-10 0 0 5 7 6 10 2.500" fill="none" stroke="#fff" strokeWidth="2.500" />
      </>
    ),
  },
  { name: 'GGJ2013', state: 'border-[#76b9ed] bg-[#3a4448]', art: <g transform="scale(1.5)">{glyphs.app}</g> },
]

function Taskbar() {
  return (
    <div className="flex h-10 shrink-0 items-center bg-[#000a0c] text-white">
      <button aria-label="开始" className="flex h-full w-12 items-center justify-center bg-black">
        <svg viewBox="0 0 16 16" className="size-4" fill="#fff">
          <path d="m0 2 7-1v6.500H0zM8 1l8-1v7.500H8zM0 8.500h7V15l-7-1zM8 8.500h8V16l-8-1z" />
        </svg>
      </button>
      <div className="flex h-full w-[344px] items-center gap-1.5 bg-[#333] pr-3 pl-2">
        <span className="size-[22px] rounded-full border-[3px] border-white" />
        <input
          aria-label="搜索"
          placeholder="在这里输入你要搜索的内容"
          className="min-w-0 flex-1 bg-transparent text-sm outline-none placeholder:text-[#9a9a9a]"
        />
        <svg viewBox="0 0 16 16" className="size-4" fill="none" stroke="#bbb">
          <path d="M6 1h4v9H6zM3.500 8v4.500h9V8M8 12v4" />
        </svg>
      </div>
      {apps.map((a) => (
        <button key={a.name} aria-label={a.name} className="flex h-full w-[50px] justify-center px-px">
          <span className={`flex h-full w-full items-center justify-center border-b-2 ${a.state ?? 'border-transparent'}`}>
            <svg viewBox="0 0 24 24" className="size-6">
              {a.art}
            </svg>
          </span>
        </button>
      ))}
      <div className="ml-auto flex h-full items-center">
        <span>链接</span>
        <svg viewBox="0 0 160 20" className="ml-2 h-5 w-40" fill="none" stroke="#fff" strokeWidth="1.200">
          <path d="m5 13 5-5 5 5" />
          <path d="M30 7h12v8H30zM42 9h2v4h-2M26 4v4h4V4m-2 4v5h2" />
          <path d="M32 9h8v4h-8z" fill="#fff" />
          <path d="M53 15a10 10 0 0 1 11-10M55.500 15A7 7 0 0 1 64 8M58 15a5 5 0 0 1 6-4M61 15a3 3 0 0 1 3-2" />
          <path d="M74 8h3l4-4v12l-4-4h-3zM83 8c1 1 1 3 0 4m2.500-7c2 3 2 7 0 10m3-12c2 4 2 10 0 14" />
          <rect x="99" y="4" width="22" height="12" />
          <path d="M101 7h18M101 10h18M104 13h12" strokeDasharray="2 1" />
          <path d="m132 17 6-14 6 14m-10-5h8" strokeWidth="1.600" />
        </svg>
        <Icon name="sogou" className="size-4" />
        <time className="w-20 pl-2 text-center leading-[19px]">
          9:20
          <br />
          2018/7/16
        </time>
        <button aria-label="通知" className="mr-px flex h-full w-[54px] items-center border-r border-[#555] bg-black pl-3">
          <svg viewBox="0 0 28 26" className="h-[26px] w-7">
            <path d="M1 2h16v12H9l-4 4v-4H1z" fill="#fff" />
            <path d="M4 5h10M4 8h10M4 11h6" stroke="#000" />
            <circle cx="18" cy="17" r="8" fill="#333" stroke="#999" />
            <text x="18" y="22" fill="#fff" fontSize="13" textAnchor="middle">1</text>
          </svg>
        </button>
      </div>
    </div>
  )
}

export default function App() {
  return (
    <div className="flex h-screen flex-col overflow-hidden bg-[#f0f0f0] font-['Open_Sans','Noto_Sans_CJK_SC',sans-serif] text-xs leading-4 whitespace-nowrap text-black">
      <TitleBar />
      <MenuBar />
      <MainToolbar />
      <main className="flex min-h-0 flex-1">
        <Sidebar />
        <div className="flex min-w-0 flex-1 flex-col">
          <DrawToolbars />
          <Viewport />
          <SnapToolbar />
          <RebarPane />
        </div>
      </main>
      <StatusBar />
      <Taskbar />
    </div>
  )
}
